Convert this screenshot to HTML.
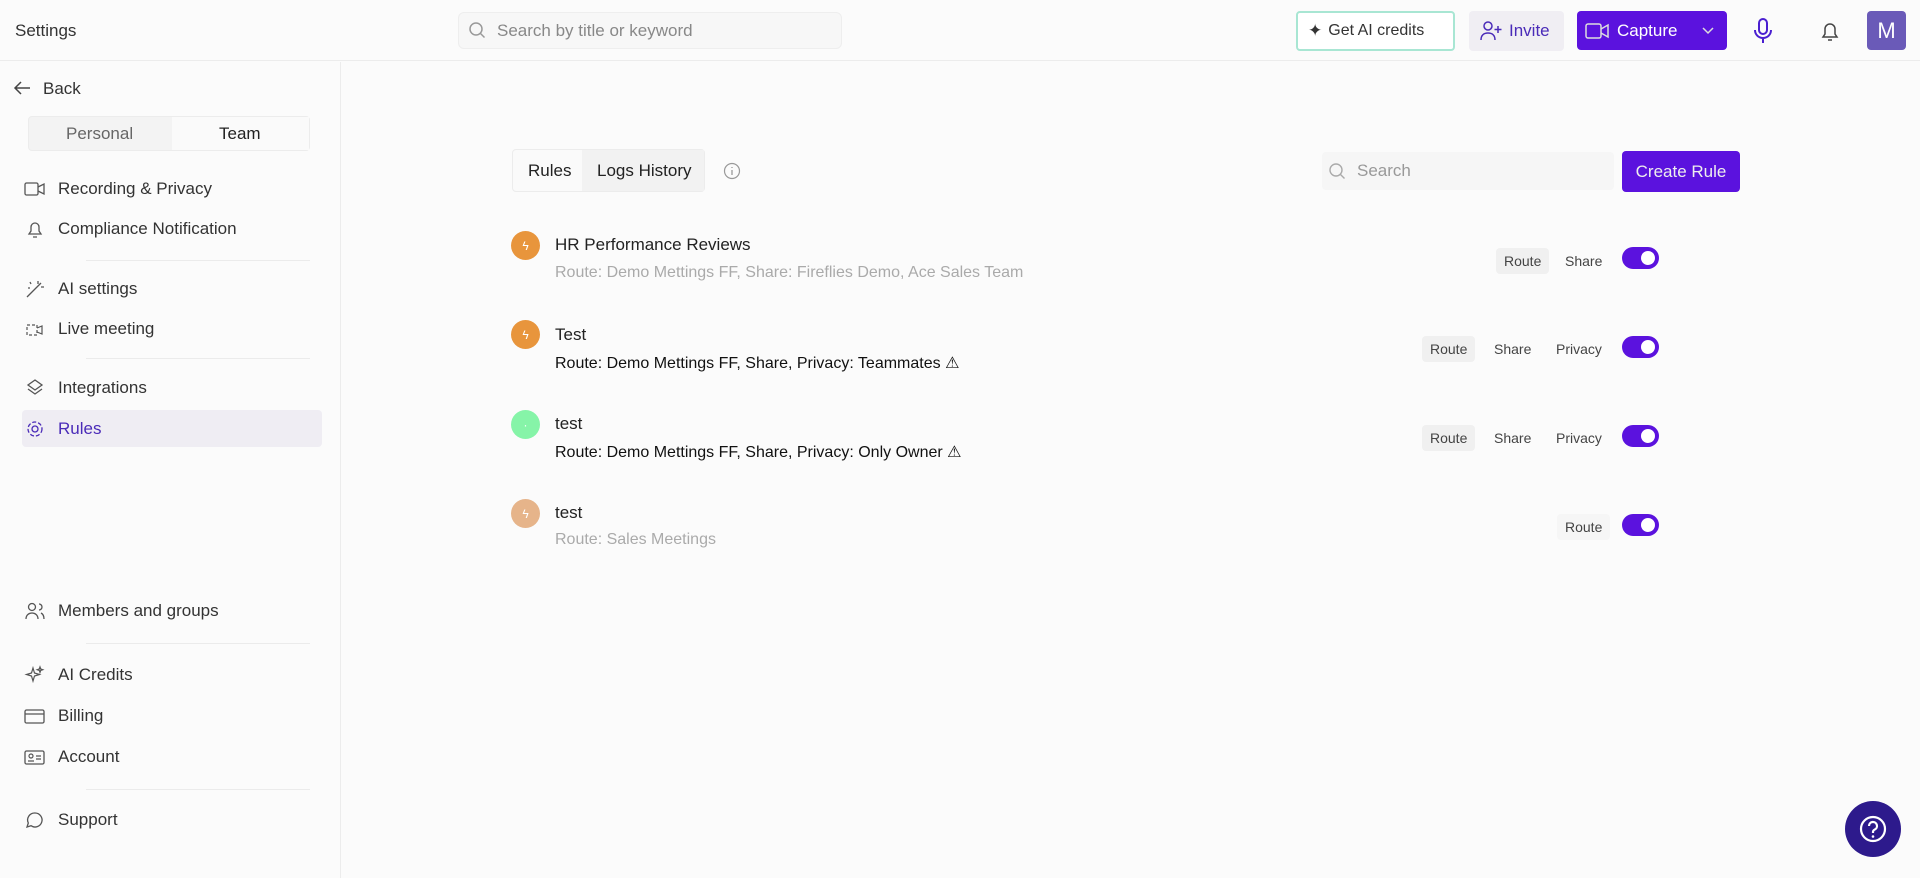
<!DOCTYPE html>
<html><head><meta charset="utf-8"><style>
*{box-sizing:border-box;margin:0;padding:0}
body{width:1920px;height:878px;overflow:hidden;background:#fbfbfb;font-family:"Liberation Sans",sans-serif;color:#222;position:relative}
.abs{position:absolute}
.hdr{left:0;top:0;width:1920px;height:61px;border-bottom:1px solid #ececec;background:#fbfbfb}
svg{display:block}
.nav{position:absolute;left:24px;display:flex;align-items:center;font-size:17px;color:#333;height:30px}
.nav svg{margin-right:12px}
.div{position:absolute;left:86px;width:224px;height:1px;background:#ebebeb}
.title{position:absolute;left:555px;font-size:17px;color:#222}
.sub{position:absolute;left:555px;font-size:16px}
.ic{position:absolute;left:511px;width:29px;height:29px;border-radius:50%;display:flex;align-items:center;justify-content:center;color:#fff;font-size:12px}
.chip{position:absolute;font-size:14px;color:#444;padding:5px 8px;border-radius:4px}
.tg{position:absolute;left:1622px;width:37px;height:22px;border-radius:11px;background:#5b12de}
.tg:after{content:"";position:absolute;right:4px;top:4px;width:14px;height:14px;border-radius:50%;background:#fff}
</style></head><body>
<div class="abs hdr"></div>
<div class="abs" style="left:15px;top:21px;font-size:17px;color:#333">Settings</div>
<div class="abs" style="left:458px;top:12px;width:384px;height:37px;border:1px solid #eee;border-radius:6px;background:#f7f7f7"></div>
<svg class="abs" style="left:468px;top:21px" width="18" height="18" viewBox="0 0 18 18"><circle cx="8" cy="8" r="6" fill="none" stroke="#999" stroke-width="1.5"/><path d="M12.5 12.5l4 4" stroke="#999" stroke-width="1.5"/></svg>
<div class="abs" style="left:497px;top:21px;font-size:17px;color:#888">Search by title or keyword</div>
<div class="abs" style="left:1296px;top:11px;width:159px;height:40px;border:2px solid #a8e6d3;border-radius:4px;background:#fff;display:flex;align-items:center;padding-left:10px;font-size:16px;color:#333"><span style="font-size:17px;margin-right:6px">✦</span>Get AI credits</div>
<div class="abs" style="left:1469px;top:11px;width:95px;height:40px;border-radius:4px;background:#f0eef3;display:flex;align-items:center;padding-left:10px;font-size:17px;color:#4a2bb8">
<svg width="26" height="22" viewBox="0 0 26 22"><circle cx="9" cy="6" r="4" fill="none" stroke="#4a2bb8" stroke-width="1.5"/><path d="M2 20c0-5 3-7 7-7s7 2 7 7M19 6v7M15.5 9.5h7" fill="none" stroke="#4a2bb8" stroke-width="1.5"/></svg><span style="margin-left:4px">Invite</span></div>
<div class="abs" style="left:1577px;top:11px;width:150px;height:39px;border-radius:4px;background:#5b12de;display:flex;align-items:center;padding-left:8px;font-size:17px;color:#fff">
<svg width="26" height="18" viewBox="0 0 26 18"><rect x="1" y="2" width="15" height="14" rx="2" fill="none" stroke="#ddd" stroke-width="1.5"/><path d="M16 7l7-4v12l-7-4" fill="none" stroke="#ddd" stroke-width="1.5"/></svg><span style="margin-left:6px">Capture</span>
<svg style="margin-left:auto;margin-right:12px" width="14" height="10" viewBox="0 0 14 10"><path d="M2 2l5 5 5-5" fill="none" stroke="#ddd" stroke-width="1.5"/></svg></div>
<svg class="abs" style="left:1753px;top:17px" width="20" height="28" viewBox="0 0 20 28"><rect x="6" y="2" width="8" height="15" rx="4" fill="none" stroke="#4a1fd0" stroke-width="2"/><path d="M2 13c0 5 4 8 8 8s8-3 8-8M10 21v5" fill="none" stroke="#4a1fd0" stroke-width="2"/></svg>
<svg class="abs" style="left:1820px;top:19px" width="20" height="24" viewBox="0 0 20 24"><path d="M3 18h14l-2-3V10a5 5 0 0 0-10 0v5z M8 21h4" fill="none" stroke="#444" stroke-width="1.5"/></svg>
<div class="abs" style="left:1867px;top:11px;width:39px;height:39px;border-radius:4px;background:#6a5ab8;color:#fff;font-size:22px;display:flex;align-items:center;justify-content:center">M</div>

<div class="abs" style="left:340px;top:62px;width:1px;height:816px;background:#ececec"></div>
<svg class="abs" style="left:13px;top:80px" width="18" height="16" viewBox="0 0 18 16"><path d="M17 8H2M8 2L2 8l6 6" fill="none" stroke="#444" stroke-width="1.5"/></svg>
<div class="abs" style="left:43px;top:79px;font-size:17px;color:#333">Back</div>
<div class="abs" style="left:28px;top:116px;width:282px;height:35px;border:1px solid #ececec;border-radius:4px;background:#f3f3f3"></div>
<div class="abs" style="left:172px;top:117px;width:137px;height:33px;background:#fafafa"></div>
<div class="abs" style="left:66px;top:124px;font-size:17px;color:#666">Personal</div>
<div class="abs" style="left:219px;top:124px;font-size:17px;color:#222">Team</div>

<div class="abs" style="left:22px;top:410px;width:300px;height:37px;border-radius:4px;background:#efedf3"></div>
<div class="nav" style="top:174px"><svg width="22" height="18" viewBox="0 0 22 18"><rect x="1" y="3" width="13" height="12" rx="1.5" fill="none" stroke="#555" stroke-width="1.3"/><path d="M14 7l6-3v10l-6-3" fill="none" stroke="#555" stroke-width="1.3"/></svg>Recording &amp; Privacy</div>
<div class="nav" style="top:214px"><svg width="22" height="20" viewBox="0 0 22 20"><path d="M5 15h12l-2-3V8a4 4 0 0 0-8 0v4zM9 18h4" fill="none" stroke="#555" stroke-width="1.3"/></svg>Compliance Notification</div>
<div class="div" style="top:260px"></div>
<div class="nav" style="top:274px"><svg width="22" height="20" viewBox="0 0 22 20"><path d="M3 18L17 4M14 2v3M17 8h3M6 3l1 2M4 9h2" fill="none" stroke="#555" stroke-width="1.3"/></svg>AI settings</div>
<div class="nav" style="top:314px"><svg width="22" height="20" viewBox="0 0 22 20"><rect x="3" y="6" width="10" height="10" fill="none" stroke="#555" stroke-width="1.2" stroke-dasharray="3 2"/><path d="M13 9l5-2v8l-5-2" fill="none" stroke="#555" stroke-width="1.2"/></svg>Live meeting</div>
<div class="div" style="top:358px"></div>
<div class="nav" style="top:373px"><svg width="22" height="20" viewBox="0 0 22 20"><path d="M11 2l7 5-7 5-7-5zM4 11l7 5 7-5" fill="none" stroke="#555" stroke-width="1.3"/></svg>Integrations</div>
<div class="nav" style="top:414px;color:#4a2bb8"><svg width="22" height="20" viewBox="0 0 22 20"><circle cx="11" cy="10" r="3" fill="none" stroke="#4a2bb8" stroke-width="1.3"/><circle cx="11" cy="10" r="7" fill="none" stroke="#4a2bb8" stroke-width="1.3" stroke-dasharray="4 2"/></svg>Rules</div>
<div class="nav" style="top:596px"><svg width="22" height="20" viewBox="0 0 22 20"><circle cx="8" cy="6" r="3.5" fill="none" stroke="#555" stroke-width="1.3"/><path d="M2 18c0-4 3-6 6-6s6 2 6 6M15 3a3 3 0 0 1 0 6M17 12c2 1 3 3 3 6" fill="none" stroke="#555" stroke-width="1.3"/></svg>Members and groups</div>
<div class="div" style="top:643px"></div>
<div class="nav" style="top:660px"><svg width="22" height="20" viewBox="0 0 22 20"><path d="M9 3l1.5 5 5 1.5-5 1.5L9 16l-1.5-5-5-1.5 5-1.5zM16 2l.7 2 2 .7-2 .7-.7 2-.7-2-2-.7 2-.7z" fill="none" stroke="#555" stroke-width="1.2"/></svg>AI Credits</div>
<div class="nav" style="top:701px"><svg width="22" height="20" viewBox="0 0 22 20"><rect x="1" y="4" width="19" height="13" rx="1.5" fill="none" stroke="#555" stroke-width="1.3"/><path d="M1 8h19" stroke="#555" stroke-width="1.3"/></svg>Billing</div>
<div class="nav" style="top:742px"><svg width="22" height="20" viewBox="0 0 22 20"><rect x="1" y="4" width="19" height="13" rx="1.5" fill="none" stroke="#555" stroke-width="1.3"/><circle cx="7" cy="9" r="2" fill="none" stroke="#555" stroke-width="1.2"/><path d="M12 9h5M12 12h5M4 14h6" stroke="#555" stroke-width="1.2"/></svg>Account</div>
<div class="div" style="top:789px"></div>
<div class="nav" style="top:805px"><svg width="22" height="20" viewBox="0 0 22 20"><path d="M11 3a7 7 0 1 1-4 12.7L3 17l1.3-4A7 7 0 0 1 11 3z" fill="none" stroke="#555" stroke-width="1.3"/></svg>Support</div>

<div class="abs" style="left:512px;top:149px;width:193px;height:43px;border:1px solid #ececec;border-radius:4px;background:#fafafa"></div>
<div class="abs" style="left:582px;top:150px;width:122px;height:41px;background:#f2f2f2"></div>
<div class="abs" style="left:528px;top:161px;font-size:17px;color:#222">Rules</div>
<div class="abs" style="left:597px;top:161px;font-size:17px;color:#222">Logs History</div>
<svg class="abs" style="left:723px;top:162px" width="18" height="18" viewBox="0 0 18 18"><circle cx="9" cy="9" r="7.5" fill="none" stroke="#999" stroke-width="1.2"/><path d="M9 8v5M9 5v1" stroke="#999" stroke-width="1.3"/></svg>
<div class="abs" style="left:1322px;top:152px;width:292px;height:38px;background:#f6f6f6;border-radius:4px"></div>
<svg class="abs" style="left:1328px;top:162px" width="18" height="18" viewBox="0 0 18 18"><circle cx="8" cy="8" r="6" fill="none" stroke="#aaa" stroke-width="1.4"/><path d="M12.5 12.5l4 4" stroke="#aaa" stroke-width="1.4"/></svg>
<div class="abs" style="left:1357px;top:161px;font-size:17px;color:#999">Search</div>
<div class="abs" style="left:1622px;top:151px;width:118px;height:41px;border-radius:4px;background:#5b12de;color:#eee;font-size:17px;display:flex;align-items:center;justify-content:center">Create Rule</div>

<div class="ic" style="top:231px;background:#e8953c">ϟ</div>
<div class="title" style="top:235px">HR Performance Reviews</div>
<div class="sub" style="top:264px;color:#aaa">Route: Demo Mettings FF, Share: Fireflies Demo, Ace Sales Team</div>
<div class="chip" style="left:1496px;top:248px;background:#f0f0f0">Route</div>
<div class="chip" style="left:1557px;top:248px">Share</div>
<div class="tg" style="top:247px"></div>

<div class="ic" style="top:320px;background:#e8953c">ϟ</div>
<div class="title" style="top:325px">Test</div>
<div class="sub" style="top:353px;color:#111">Route: Demo Mettings FF, Share, Privacy: Teammates ⚠</div>
<div class="chip" style="left:1422px;top:336px;background:#f0f0f0">Route</div>
<div class="chip" style="left:1486px;top:336px">Share</div>
<div class="chip" style="left:1548px;top:336px">Privacy</div>
<div class="tg" style="top:336px"></div>

<div class="ic" style="top:410px;background:#86f4a8">·</div>
<div class="title" style="top:414px">test</div>
<div class="sub" style="top:442px;color:#111">Route: Demo Mettings FF, Share, Privacy: Only Owner ⚠</div>
<div class="chip" style="left:1422px;top:425px;background:#f0f0f0">Route</div>
<div class="chip" style="left:1486px;top:425px">Share</div>
<div class="chip" style="left:1548px;top:425px">Privacy</div>
<div class="tg" style="top:425px"></div>

<div class="ic" style="top:499px;background:#e6b48a">ϟ</div>
<div class="title" style="top:503px">test</div>
<div class="sub" style="top:531px;color:#aaa">Route: Sales Meetings</div>
<div class="chip" style="left:1557px;top:514px;background:#f6f6f6">Route</div>
<div class="tg" style="top:514px"></div>

<div class="abs" style="left:1845px;top:801px;width:56px;height:56px;border-radius:50%;background:#2d1a8c;display:flex;align-items:center;justify-content:center">
<svg width="30" height="30" viewBox="0 0 30 30"><circle cx="15" cy="15" r="12" fill="none" stroke="#fff" stroke-width="2.2"/><path d="M11 12a4 4 0 1 1 5.5 3.7c-1 .5-1.5 1.2-1.5 2.3v1" fill="none" stroke="#fff" stroke-width="2.2"/><circle cx="15" cy="22.5" r="1.3" fill="#fff"/></svg></div>
</body></html>
